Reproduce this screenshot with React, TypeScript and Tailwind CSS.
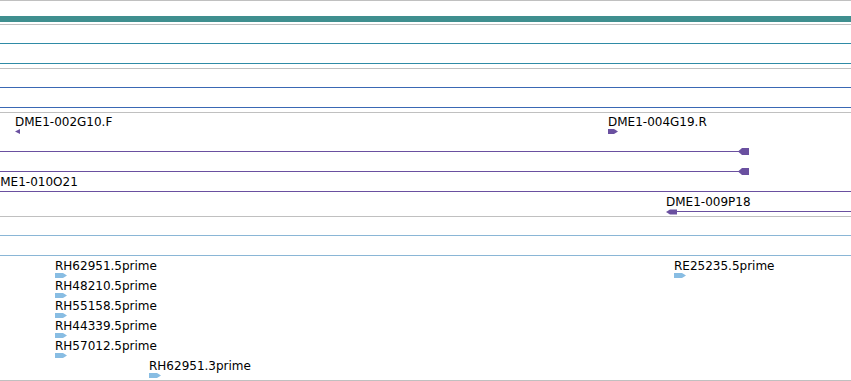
import React from "react";

const GRAY = "bg-[#c0c0c0]";
const purple = "#6a50a0";
const lightBlue = "#88bde3";

type Kind = "left" | "right" | "blue" | "line" | "lineArrowEnd" | "lineArrowStart";

type Feature = {
  label?: string;
  x: number;
  kind: Kind;
  end?: number;
};

// each inner array is one 20px row of a track
const cloneRows: Feature[][] = [
  [
    { label: "DME1-002G10.F", x: 15, kind: "left" },
    { label: "DME1-004G19.R", x: 608, kind: "right" },
  ],
  [{ x: 0, kind: "lineArrowEnd", end: 749 }],
  [{ x: 0, kind: "lineArrowEnd", end: 749 }],
  [{ label: "DME1-010O21", x: -9, kind: "line" }],
  [{ label: "DME1-009P18", x: 666, kind: "lineArrowStart" }],
];

const estRows: Feature[][] = [
  [{ x: 0, kind: "line" }],
  [{ x: 0, kind: "line" }],
  [
    { label: "RH62951.5prime", x: 55, kind: "blue" },
    { label: "RE25235.5prime", x: 674, kind: "blue" },
  ],
  [{ label: "RH48210.5prime", x: 55, kind: "blue" }],
  [{ label: "RH55158.5prime", x: 55, kind: "blue" }],
  [{ label: "RH44339.5prime", x: 55, kind: "blue" }],
  [{ label: "RH57012.5prime", x: 55, kind: "blue" }],
  [{ label: "RH62951.3prime", x: 149, kind: "blue" }],
];

function Glyph({ kind, end, x, color }: { kind: Kind; end?: number; x: number; color: string }) {
  if (kind === "left") {
    return (
      <svg width="5" height="5">
        <polygon points="0,2.5 5,0 5,5" fill={purple} />
      </svg>
    );
  }
  if (kind === "right") {
    return (
      <svg width="10" height="5">
        <polygon points="0,0 6,0 10,2.5 6,5 0,5" fill={purple} />
      </svg>
    );
  }
  if (kind === "blue") {
    return (
      <svg width="12" height="5">
        <polygon points="0,0 8,0 12,2.5 8,5 0,5" fill={lightBlue} />
      </svg>
    );
  }
  if (kind === "line") {
    return <div className="h-px w-full" style={{ backgroundColor: color }} />;
  }
  if (kind === "lineArrowEnd") {
    return (
      <div className="flex items-center" style={{ width: (end ?? 0) - x }}>
        <div className="h-px flex-1 bg-[#6a50a0]" />
        <svg width="11" height="7" className="-ml-px">
          <polygon points="0,3.5 4,0 11,0 11,7 4,7" fill={purple} />
        </svg>
      </div>
    );
  }
  return (
    <div className="flex w-full items-center">
      <svg width="11" height="6" className="-mr-px">
        <polygon points="0,3 4,0.5 11,0.5 11,5.5 4,5.5" fill={purple} />
      </svg>
      <div className="h-px flex-1 bg-[#6a50a0]" />
    </div>
  );
}

function TrackRow({ features, color }: { features: Feature[]; color: string }) {
  return (
    <div className="relative h-[20px]">
      {features.map((f, i) => {
        const spans = f.kind === "line" || f.kind === "lineArrowStart";
        return (
          <div
            key={i}
            className={`absolute top-0 flex flex-col ${spans ? "right-0" : ""}`}
            style={{ left: f.x }}
          >
            <div className="h-[13px] whitespace-nowrap text-[12px] leading-[14px] text-black">
              {f.label}
            </div>
            <div className="flex h-[7px] items-center">
              <Glyph kind={f.kind} end={f.end} x={f.x} color={color} />
            </div>
          </div>
        );
      })}
    </div>
  );
}

function Track({ rows, height, color }: { rows: Feature[][]; height: string; color: string }) {
  return (
    <div className={`flex flex-col overflow-hidden pt-[2px] ${height}`}>
      {rows.map((r, i) => (
        <TrackRow key={i} features={r} color={color} />
      ))}
    </div>
  );
}

function PlainTrack({ color }: { color: string }) {
  return (
    <div className="flex h-[43px] flex-col pt-[18px]">
      <div className="h-px" style={{ backgroundColor: color }} />
      <div className="mt-[19px] h-px" style={{ backgroundColor: color }} />
    </div>
  );
}

export default function App() {
  return (
    <div
      className="flex h-[381px] w-[851px] flex-col overflow-hidden bg-white"
      style={{ fontFamily: '"DejaVu Sans", sans-serif' }}
    >
      {/* ruler */}
      <div className={`h-px ${GRAY}`} />
      <div className="flex h-[23px] flex-col pt-[15px]">
        <div className="h-[6px] bg-[#3f8f8f]" />
      </div>
      <div className={`h-px ${GRAY}`} />

      <PlainTrack color="#2f8ba6" />
      <div className={`h-px ${GRAY}`} />

      <PlainTrack color="#3a68b4" />
      <div className={`h-px ${GRAY}`} />

      <Track rows={cloneRows} height="h-[103px]" color={purple} />
      <div className={`h-px ${GRAY}`} />

      <Track rows={estRows} height="h-[163px]" color="#8ab6d6" />
      <div className={`h-px ${GRAY}`} />
    </div>
  );
}
